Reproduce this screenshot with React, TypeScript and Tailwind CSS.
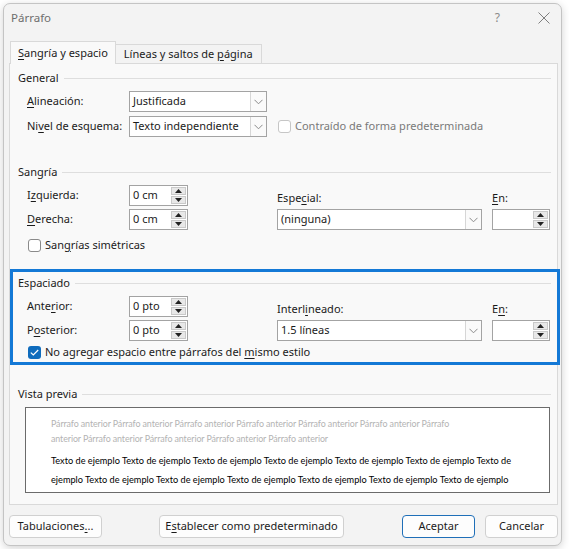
import React from "react";

const K = ({ children }: { children: React.ReactNode }) => (
  <span className="underline underline-offset-[2px] decoration-1">{children}</span>
);

function Heading({ children }: { children: React.ReactNode }) {
  return (
    <div className="flex items-center h-[16px]">
      <span className="whitespace-nowrap">{children}</span>
      <div className="flex-1 h-px bg-[#dedede] ml-[5px]" />
    </div>
  );
}

function Chevron() {
  return (
    <svg width="9" height="6" viewBox="0 0 9 6" fill="none">
      <path d="M0.5 0.8 L4.5 4.8 L8.5 0.8" stroke="#8a8a8a" strokeWidth="1" />
    </svg>
  );
}

function Select({ value, w }: { value: string; w: string }) {
  return (
    <div className={`${w} h-[21px] flex border border-[#a3a3a3] bg-white`}>
      <div className="flex-1 flex items-center pl-[3px] whitespace-nowrap overflow-hidden">{value}</div>
      <div className="w-[16px] flex items-center justify-center border-l border-[#d6d6d6] bg-[#fafafa]">
        <Chevron />
      </div>
    </div>
  );
}

function Spin({ value = "", w = "w-[59px]" }: { value?: string; w?: string }) {
  return (
    <div className={`${w} h-[21px] flex border border-[#a3a3a3] bg-white`}>
      <div className="flex-1 flex items-center pl-[3px] whitespace-nowrap">{value}</div>
      <div className="w-[16px] flex flex-col gap-[1px] py-[1px] pr-[1px]">
        <div className="flex-1 flex items-center justify-center bg-[#e8e8e8] border border-[#c9c9c9]">
          <svg width="7" height="4" viewBox="0 0 7 4">
            <path d="M0 4 L3.5 0 L7 4 Z" fill="#222" />
          </svg>
        </div>
        <div className="flex-1 flex items-center justify-center bg-[#e8e8e8] border border-[#c9c9c9]">
          <svg width="7" height="4" viewBox="0 0 7 4">
            <path d="M0 0 L3.5 4 L7 0 Z" fill="#222" />
          </svg>
        </div>
      </div>
    </div>
  );
}

function Check({ checked = false, disabled = false }: { checked?: boolean; disabled?: boolean }) {
  if (checked) {
    return (
      <div className="w-[13px] h-[13px] rounded-[3px] bg-[#0f6cbd] flex items-center justify-center">
        <svg width="9" height="7" viewBox="0 0 9 7" fill="none">
          <path d="M0.8 3.6 L3.3 6 L8.2 1" stroke="white" strokeWidth="1.2" />
        </svg>
      </div>
    );
  }
  return (
    <div
      className={`w-[13px] h-[13px] rounded-[3px] border bg-white ${
        disabled ? "border-[#c6c6c6]" : "border-[#8a8a8a]"
      }`}
    />
  );
}

function Button({ children, w, primary = false }: { children: React.ReactNode; w: string; primary?: boolean }) {
  return (
    <div
      className={`${w} h-[23px] flex items-center justify-center rounded-[4px] bg-[#fdfdfd] border ${
        primary ? "border-[#1f6fb8]" : "border-[#d0d0d0]"
      }`}
    >
      {children}
    </div>
  );
}

const grid = "grid grid-cols-[102px_59px_89px_205px_10px_58px] gap-y-[3px] pl-[9px]";

export default function App() {
  return (
    <div className="w-[569px] h-[549px] bg-white overflow-hidden font-['Noto_Sans',sans-serif] text-[11px] text-[#1b1b1b]">
      <div className="ml-[3px] mt-[3px] w-[559px] h-[543px] rounded-[7px] border border-[#c4c4c4] bg-[#f3f3f3] shadow-[0_2px_8px_rgba(0,0,0,0.18)] flex flex-col">
        {/* title bar */}
        <div className="h-[28px] flex items-center pl-[7px] pr-[11px]">
          <span className="text-[#6e6e6e] text-[11.5px]">Párrafo</span>
          <span className="ml-auto text-[#8a8a8a] text-[12px] mr-[38px]">?</span>
          <svg width="12" height="12" viewBox="0 0 12 12">
            <path d="M0.5 0.5 L11.5 11.5 M11.5 0.5 L0.5 11.5" stroke="#7e7e7e" strokeWidth="1" />
          </svg>
        </div>

        {/* tabs */}
        <div className="flex items-end pl-[6px] mt-[9px]">
          <div className="relative z-10 -mb-px h-[23px] px-[7px] flex items-center bg-[#f9f9f9] border border-b-0 border-[#d9d9d9]">
            <span><K>S</K>angría y espacio</span>
          </div>
          <div className="h-[19px] px-[8px] flex items-center bg-[#f3f3f3] border border-l-0 border-b-0 border-[#d9d9d9]">
            <span>Líneas y saltos de <K>p</K>ágina</span>
          </div>
        </div>

        {/* panel */}
        <div className="ml-[5px] w-[549px] h-[442px] bg-[#f9f9f9] border border-[#d9d9d9] pl-[8px] pr-[6px] pt-[6px]">
          <Heading>General</Heading>
          <div className="mt-[5px] pl-[9px] flex flex-col gap-[4px]">
            <div className="flex items-center h-[21px]">
              <div className="w-[102px]"><K>A</K>lineación:</div>
              <Select value="Justificada" w="w-[138px]" />
            </div>
            <div className="flex items-center h-[21px]">
              <div className="w-[102px]">Ni<K>v</K>el de esquema:</div>
              <Select value="Texto independiente" w="w-[138px]" />
              <div className="ml-[11px] flex items-center gap-[4px] text-[#7a7a7a]">
                <Check disabled />
                <span>Contraído de forma predeterminada</span>
              </div>
            </div>
          </div>

          <div className="mt-[27px]">
            <Heading>Sangría</Heading>
          </div>
          <div className={`${grid} mt-[5px] items-center`}>
            <div className="h-[21px] flex items-center">I<K>z</K>quierda:</div>
            <Spin value="0 cm" />
            <div />
            <div className="self-end">Espe<K>c</K>ial:</div>
            <div />
            <div className="self-end"><K>E</K>n:</div>
            <div className="h-[21px] flex items-center"><K>D</K>erecha:</div>
            <Spin value="0 cm" />
            <div />
            <Select value="(ninguna)" w="w-[205px]" />
            <div />
            <Spin w="w-[58px]" />
          </div>
          <div className="mt-[8px] pl-[10px] h-[14px] flex items-center gap-[4px]">
            <Check />
            <span>San<K>g</K>rías simétricas</span>
          </div>

          {/* highlighted spacing section */}
          <div className="mt-[17px] -ml-[8px] -mr-[9px] border-[3px] border-[#1479d6] pl-[5px] pr-[6px] pt-[3px] pb-[3px]">
            <Heading>Espaciado</Heading>
            <div className={`${grid} mt-[5px] items-center`}>
              <div className="h-[21px] flex items-center">Ante<K>r</K>ior:</div>
              <Spin value="0 pto" />
              <div />
              <div className="self-end">Interl<K>i</K>neado:</div>
              <div />
              <div className="self-end">E<K>n</K>:</div>
              <div className="h-[21px] flex items-center">P<K>o</K>sterior:</div>
              <Spin value="0 pto" />
              <div />
              <Select value="1.5 líneas" w="w-[205px]" />
              <div />
              <Spin w="w-[58px]" />
            </div>
            <div className="mt-[4px] pl-[10px] h-[14px] flex items-center gap-[4px]">
              <Check checked />
              <span>No agregar espacio entre párrafos del <K>m</K>ismo estilo</span>
            </div>
          </div>

          <div className="mt-[21px]">
            <Heading>Vista previa</Heading>
          </div>
          <div className="mt-[5px] ml-[7px] mr-px h-[86px] bg-white border border-[#6b6b6b] pl-[25px] pt-[8px] whitespace-nowrap overflow-hidden">
            <div className="font-['Lato',sans-serif] text-[8.9px] leading-[15px] text-[#b3b3b3] tracking-[-0.1px]">
              <div>Párrafo anterior Párrafo anterior Párrafo anterior Párrafo anterior Párrafo anterior Párrafo anterior Párrafo</div>
              <div>anterior Párrafo anterior Párrafo anterior Párrafo anterior Párrafo anterior</div>
            </div>
            <div className="mt-[5px] font-['Lato',sans-serif] text-[9.2px] leading-[19px] text-black">
              <div>Texto de ejemplo Texto de ejemplo Texto de ejemplo Texto de ejemplo Texto de ejemplo Texto de ejemplo Texto de</div>
              <div>ejemplo Texto de ejemplo Texto de ejemplo Texto de ejemplo Texto de ejemplo Texto de ejemplo Texto de ejemplo</div>
            </div>
          </div>
        </div>

        {/* footer */}
        <div className="mt-[10px] pl-[5px] pr-[3px] flex items-center">
          <Button w="w-[93px]">Tabulaciones<K>.</K>..</Button>
          <div className="ml-[57px]">
            <Button w="w-[185px]">E<K>s</K>tablecer como predeterminado</Button>
          </div>
          <div className="ml-auto flex gap-[10px]">
            <Button w="w-[73px]" primary>Aceptar</Button>
            <Button w="w-[73px]">Cancelar</Button>
          </div>
        </div>
      </div>
    </div>
  );
}
